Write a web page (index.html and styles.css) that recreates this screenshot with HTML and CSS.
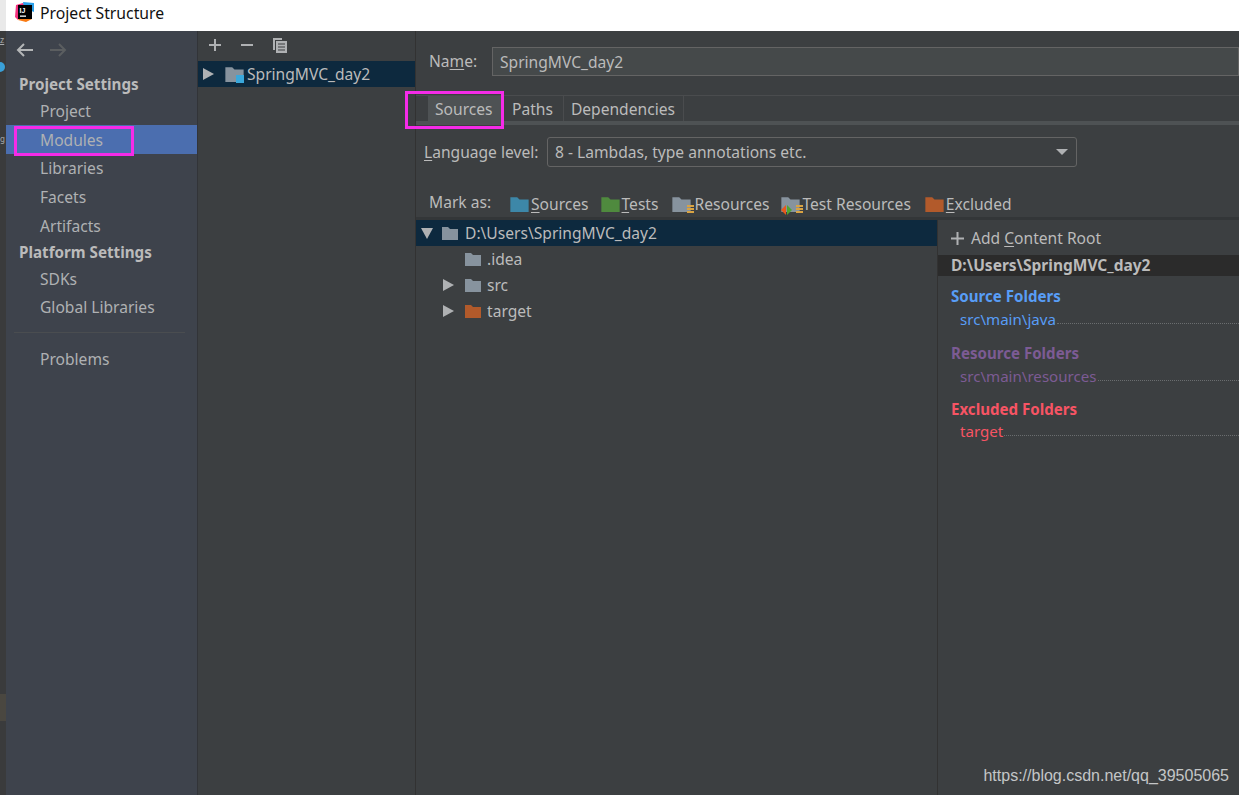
FILE: index.html
```html
<!DOCTYPE html>
<html lang="en">
<head>
<meta charset="utf-8">
<title>Project Structure</title>
<link rel="stylesheet" href="styles.css">
</head>
<body>
<svg width="0" height="0" class="defs">
  <defs>
    <symbol id="folder" viewBox="0 0 16 14"><path d="M0 1h6l2 2h8v11H0z"/></symbol>
  </defs>
</svg>
<div class="desk">
  <div class="desk-top"></div>
  <div class="desk-dark">
    <div class="desk-z">z</div>
    <span class="desk-dot"></span>
    <div class="desk-g">g</div>
  </div>
  <div class="desk-tan"></div>
</div>
<div class="window">
<header class="titlebar">
  <svg class="logo" width="20" height="20" viewBox="0 0 20 20">
    <path d="M1 3l7-2 3 3-8 14-3-3z" fill="#f5317f"/>
    <path d="M8 0l11 1v9L9 6z" fill="#2b9fe8"/>
    <path d="M3 18l8 2 6-3-8-4z" fill="#f97a12"/>
    <rect x="3" y="3" width="14" height="14" fill="#000"/>
    <text x="4.6" y="10.5" class="logo-text">IJ</text>
    <rect x="5" y="13.5" width="6" height="1.3" fill="#fff"/>
  </svg>
  <span class="title">Project Structure</span>
</header>
<div class="main">
  <aside class="sidebar">
    <div class="nav-arrows">
      <svg width="18" height="14" viewBox="0 0 18 14" class="arrow"><path d="M8 1L2 7l6 6M2 7h15" fill="none" stroke="#b4b6b7" stroke-width="2"/></svg>
      <svg width="18" height="14" viewBox="0 0 18 14" class="arrow"><path d="M10 1l6 6-6 6M16 7H1" fill="none" stroke="#5b5e60" stroke-width="2"/></svg>
    </div>
    <div class="group">Project Settings</div>
    <div class="item">Project</div>
    <div class="item active">Modules<span class="mark mark-modules"></span></div>
    <div class="item">Libraries</div>
    <div class="item">Facets</div>
    <div class="item">Artifacts</div>
    <div class="group group-tight">Platform Settings</div>
    <div class="item">SDKs</div>
    <div class="item">Global Libraries</div>
    <div class="divider"></div>
    <div class="item">Problems</div>
  </aside>
  <section class="modules">
    <div class="toolbar">
      <svg width="14" height="14" viewBox="0 0 14 14"><path d="M7 1v12M1 7h12" stroke="#afb1b3" stroke-width="2"/></svg>
      <svg width="14" height="14" viewBox="0 0 14 14"><path d="M1 7h12" stroke="#afb1b3" stroke-width="2"/></svg>
      <svg width="16" height="17" viewBox="0 0 16 17"><path d="M1 1h9v2H3v10H1z" fill="#afb1b3"/><path d="M4 4h11v12H4z" fill="#afb1b3"/><path d="M6 7h7M6 10h7M6 13h7" stroke="#3c3f41" stroke-width="1.2"/></svg>
    </div>
    <div class="module-row">
      <span class="tri tri-right"></span>
      <span class="folder-wrap">
        <svg class="folder f-grey" width="19" height="16"><use href="#folder"/></svg>
        <span class="module-badge"></span>
      </span>
      <span>SpringMVC_day2</span>
    </div>
  </section>
  <section class="content">
    <div class="name-row">
      <label class="name-label">Na<u>m</u>e:</label>
      <div class="name-input">SpringMVC_day2</div>
    </div>
    <div class="tabs">
      <div class="tab tab-on">Sources<span class="mark mark-sources"></span></div>
      <div class="tab tab-paths">Paths</div>
      <div class="tab">Dependencies</div>
    </div>
    <div class="tabs-line"></div>
    <div class="lang-row">
      <label class="lang-label"><u>L</u>anguage level:</label>
      <div class="combo">
        <span>8 - Lambdas, type annotations etc.</span>
        <span class="combo-caret"></span>
      </div>
    </div>
    <div class="mark-row">
      <span class="mark-label">Mark as:</span>
      <span class="mark-btn"><svg class="folder f-blue" width="19" height="16"><use href="#folder"/></svg><span><u>S</u>ources</span></span>
      <span class="mark-btn mb-tests"><svg class="folder f-green" width="19" height="16"><use href="#folder"/></svg><span><u>T</u>ests</span></span>
      <span class="mark-btn mb-res">
        <span class="folder-wrap">
          <svg class="folder f-grey" width="19" height="16"><use href="#folder"/></svg>
          <svg class="res-badge" width="8" height="9" viewBox="0 0 8 9"><path d="M1 1h7M1 4h7M1 7h7" stroke="#d9a343" stroke-width="2"/></svg>
        </span>
        <span>Resources</span>
      </span>
      <span class="mark-btn mb-test">
        <span class="folder-wrap">
          <svg class="folder f-grey" width="19" height="16"><use href="#folder"/></svg>
          <svg class="res-badge" width="8" height="9" viewBox="0 0 8 9"><path d="M1 1h7M1 4h7M1 7h7" stroke="#d9a343" stroke-width="2"/></svg>
          <svg class="test-badge" width="11" height="10" viewBox="0 0 11 10"><path d="M5 0v10L0 5z" fill="#e8591c"/><path d="M6 0v10l5-5z" fill="#4fa52d"/></svg>
        </span>
        <span>Test Resources</span>
      </span>
      <span class="mark-btn"><svg class="folder f-orange" width="19" height="16"><use href="#folder"/></svg><span><u>E</u>xcluded</span></span>
    </div>
    <div class="split">
      <div class="tree">
        <div class="tree-row tree-selected">
          <span class="tri tri-down"></span>
          <svg class="folder f-grey" width="16" height="14"><use href="#folder"/></svg>
          <span>D:\Users\SpringMVC_day2</span>
        </div>
        <div class="tree-row tree-child">
          <span class="tri-gap"></span>
          <svg class="folder f-grey" width="16" height="14"><use href="#folder"/></svg>
          <span>.idea</span>
        </div>
        <div class="tree-row tree-child">
          <span class="tri tri-right"></span>
          <svg class="folder f-grey" width="16" height="14"><use href="#folder"/></svg>
          <span>src</span>
        </div>
        <div class="tree-row tree-child">
          <span class="tri tri-right"></span>
          <svg class="folder f-orange" width="16" height="14"><use href="#folder"/></svg>
          <span>target</span>
        </div>
      </div>
      <div class="roots">
        <div class="add-root">
          <svg width="13" height="13" viewBox="0 0 13 13"><path d="M6.500 0v13M0 6.500h13" stroke="#afb1b3" stroke-width="2"/></svg>
          <span>Add <u>C</u>ontent Root</span>
        </div>
        <div class="root-head">D:\Users\SpringMVC_day2</div>
        <div class="root-title c-blue">Source Folders</div>
        <div class="root-path c-blue"><span>src\main\java</span><i class="dots"></i></div>
        <div class="root-title c-purple">Resource Folders</div>
        <div class="root-path c-purple"><span>src\main\resources</span><i class="dots"></i></div>
        <div class="root-title c-red">Excluded Folders</div>
        <div class="root-path c-red"><span>target</span><i class="dots"></i></div>
      </div>
    </div>
  </section>
</div>
</div>
<div class="watermark">https://blog.csdn.net/qq_39505065</div>
</body>
</html>
```
FILE: styles.css
```css
* { box-sizing: border-box; }
html, body { margin: 0; padding: 0; }
body {
  position: relative;
  width: 1239px;
  height: 795px;
  overflow: hidden;
  display: flex;
  background: #3c3f41;
  color: #bbbbbb;
  font-family: "Noto Sans", "Open Sans", sans-serif;
  font-size: 15.600px;
}
.defs { position: absolute; }
u { text-underline-offset: 2px; text-decoration-thickness: 1px; }
.desk { width: 6px; flex: none; display: flex; flex-direction: column; background: #3a3b3c; overflow: hidden; }
.desk-top { height: 31px; background: #e9e9e9; }
.desk-dark { height: 663px; font-size: 9px; line-height: 14px; color: #a9abad; }
.desk-z { height: 27px; padding-top: 2px; text-decoration: underline; }
.desk-dot { display: block; width: 6px; height: 10px; border-radius: 0 5px 5px 0; background: #3aa0d8; margin-left: -1px; margin-top: 4px; }
.desk-g { margin-top: 60px; font-size: 8px; }
.desk-tan { height: 27px; background: #4a4740; }
.window { flex: 1; min-width: 0; display: flex; flex-direction: column; }
.titlebar {
  height: 31px;
  flex: none;
  background: #fff;
  display: flex;
  align-items: center;
  padding: 0 0 5px 9px;
  gap: 5px;
  color: #111;
  font-size: 15.750px;
}
.logo { margin-top: -3px; }
.logo-text { font: bold 7px "Liberation Sans", sans-serif; fill: #fff; }
.main { flex: 1; display: flex; min-height: 0; }
.sidebar {
  width: 192px;
  flex: none;
  background: #3e434c;
  border-right: 1px solid #323438;
}
.nav-arrows { height: 38px; display: flex; align-items: center; gap: 15px; padding: 0 0 0 10px; }
.group { height: 27.500px; padding: 2px 0 0 13px; display: flex; align-items: center; font-weight: 700; font-size: 15.200px; color: #bbbbbb; }
.group-tight { height: 24px; padding-top: 0; }
.item { position: relative; height: 28.750px; padding-left: 34px; display: flex; align-items: center; color: #afb1b3; }
.active { background: #4b6eaf; }
.divider { height: 1px; background: #4a4d50; margin: 10px 12px 12px 8px; }
.mark { position: absolute; border: 3px solid #f52be8; pointer-events: none; }
.mark-modules { left: 8px; top: 1px; width: 120px; height: 30px; }
.mark-sources { left: -23px; top: -5px; width: 99px; height: 38px; }
.modules { width: 218px; flex: none; background: #3c3f41; border-right: 1px solid #323232; }
.toolbar { height: 30px; display: flex; align-items: center; gap: 18px; padding: 0 0 2px 10px; }
.module-row { height: 26px; background: #0d293e; display: flex; align-items: center; padding-left: 5px; color: #bbbbbb; }
.tri { display: block; flex: none; width: 0; height: 0; }
.tri-right { border-left: 11px solid #afb1b3; border-top: 6px solid transparent; border-bottom: 6px solid transparent; }
.tri-down { border-top: 11px solid #afb1b3; border-left: 6px solid transparent; border-right: 6px solid transparent; }
.tri-gap { width: 11px; flex: none; }
.folder-wrap { position: relative; display: block; flex: none; line-height: 0; }
.modules .folder-wrap { margin: 0 3px 0 11px; }
.folder { display: block; flex: none; }
.f-grey { fill: #87939e; }
.f-blue { fill: #3d87a8; }
.f-green { fill: #4f8a3e; }
.f-orange { fill: #b25a2b; }
.module-badge { position: absolute; right: 0; bottom: -1px; width: 8px; height: 8px; background: #3aa8dc; }
.content { flex: 1; min-width: 0; display: flex; flex-direction: column; }
.name-row { height: 65px; flex: none; display: flex; align-items: center; padding: 0 0 4px 13px; border-bottom: 1px solid #4a4c4e; }
.name-label { width: 63px; flex: none; }
.name-input { flex: 1; height: 29px; margin-top: 1px; background: #45494a; border: 1px solid #646464; padding-left: 7px; display: flex; align-items: center; }
.tabs { height: 25px; display: flex; padding-left: 12px; flex: none; }
.tab { position: relative; padding: 0 8px 0 7px; display: flex; align-items: center; border-right: 1px solid #4a4c4e; }
.tab-on { background: #4e5254; width: 76px; border: 0; padding: 0 7px; }
.tab-paths { padding: 0 10px 0 8px; }
.tabs-line { height: 4px; background: #4e5254; flex: none; }
.lang-row { height: 54px; flex: none; display: flex; align-items: center; padding-left: 8px; }
.lang-label { width: 123px; flex: none; }
.combo { width: 530px; height: 30px; border: 1px solid #646464; border-radius: 3px; background: #3c3f41; display: flex; align-items: center; justify-content: space-between; padding: 0 8px 0 7px; }
.combo-caret { width: 0; height: 0; border-top: 6px solid #afb1b3; border-left: 6px solid transparent; border-right: 6px solid transparent; }
.mark-row { height: 41px; flex: none; display: flex; align-items: center; padding: 12px 0 0 13px; border-bottom: 3px solid #333638; }
.mark-label { width: 81px; flex: none; position: relative; top: -2px; }
.mark-btn { display: flex; align-items: center; gap: 2px; margin-right: 12px; }
.mb-tests { margin-right: 14px; }
.mb-res { gap: 3px; }
.mb-test { gap: 2px; margin-right: 14px; }
.res-badge { position: absolute; right: -3px; bottom: -2px; }
.test-badge { position: absolute; left: 0; bottom: -3px; }
.split { flex: 1; min-height: 0; display: flex; }
.tree { width: 522px; flex: none; border-right: 1px solid #323232; }
.tree-row { height: 26px; display: flex; align-items: center; gap: 6px; }
.tree-selected { background: #0d293e; padding-left: 5px; gap: 7px; }
.tree-selected .tri { margin-right: 2px; }
.tree-child { padding-left: 27px; }
.tree-child .folder { margin-left: 5px; }
.roots { flex: 1; min-width: 0; }
.add-root { height: 35px; display: flex; align-items: center; gap: 7px; padding: 1px 0 0 13px; }
.root-head { height: 21px; background: #2b2b2b; display: flex; align-items: center; padding: 0 0 1px 13px; font-weight: 700; font-size: 15.500px; }
.root-title { padding-left: 13px; font-weight: 700; font-size: 15.100px; height: 20px; display: flex; align-items: center; margin-top: 10px; }
.root-title.c-purple, .root-title.c-red { margin-top: 11px; }
.root-path { padding-left: 22px; height: 26px; display: flex; align-items: center; font-size: 15.100px; }
.root-path.c-purple { height: 25px; }
.root-path.c-red { height: 24px; }
.dots { flex: 1; margin-top: 9px; margin-left: 1px; border-bottom: 1px dotted #6a6d6f; height: 1px; }
.c-blue { color: #589df6; }
.c-purple { color: #7c5b94; }
.c-red { color: #f75464; }
.watermark {
  position: absolute;
  right: 10px;
  bottom: 10px;
  font-family: "Liberation Sans", Arial, sans-serif;
  font-size: 16px;
  color: #c4c6c7;
}
```
